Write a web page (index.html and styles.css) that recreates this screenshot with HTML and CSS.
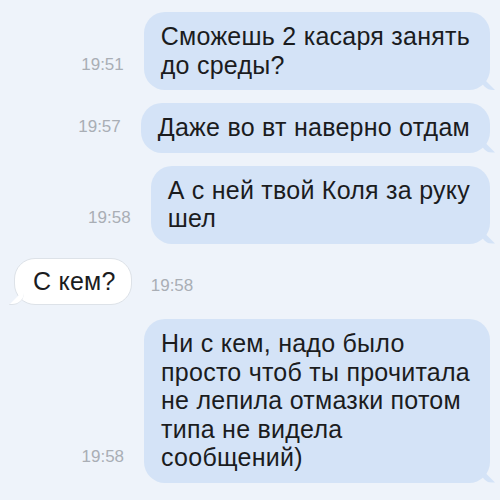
FILE: index.html
```html
<!DOCTYPE html>
<html lang="ru">
<head>
    <meta charset="UTF-8">
    <title>Чат</title>
    <link rel="stylesheet" href="styles.css">
</head>
<body>
    <div class="chat">
        <div class="row out">
            <span class="time">19:51</span>
            <div class="bubble">Сможешь 2 касаря занять<br>до среды?</div>
        </div>
        <div class="row out">
            <span class="time">19:57</span>
            <div class="bubble">Даже во вт наверно отдам</div>
        </div>
        <div class="row out">
            <span class="time">19:58</span>
            <div class="bubble">А с ней твой Коля за руку<br>шел</div>
        </div>
        <div class="row in">
            <div class="bubble">С кем?</div>
            <span class="time">19:58</span>
        </div>
        <div class="row out">
            <span class="time">19:58</span>
            <div class="bubble">Ни с кем, надо было<br>просто чтоб ты прочитала<br>не лепила отмазки потом<br>типа не видела<br>сообщений)</div>
        </div>
    </div>
</body>
</html>
```

FILE: styles.css
```css
body { margin: 0; background: #eef3fa; font-family: "Liberation Sans", Arial, sans-serif; }
.chat { width: 500px; height: 500px; padding: 12px 10px 0 10px; box-sizing: border-box; display: flex; flex-direction: column; gap: 13px; overflow: hidden; }
.row { display: flex; align-items: flex-end; }
.row.out { justify-content: flex-end; }
.row.in { align-items: center; gap: 19px; margin: 1px 0 1px 4px; }
.time { font-size: 17px; line-height: 28.5px; color: #a9aeb5; margin-right: 20px; margin-bottom: 11px; }
.row.in .time { margin: 10px 0 0 0; }
.bubble { position: relative; padding: 10px 20px 11px 17px; font-size: 25px; line-height: 28.5px; letter-spacing: 0.25px; color: #1b1c1e; background: #d4e3f7; border-radius: 21px; white-space: nowrap; }
.row.out .bubble::after { content: ""; position: absolute; right: -5px; bottom: 0; width: 14px; height: 14px; background: #d4e3f7; border-bottom-left-radius: 12px; clip-path: polygon(0 0, 100% 100%, 0 100%); }
.row.in .bubble { background: #fff; border: 1px solid #dde2e8; padding: 8px 15px 9px 18px; }
.row.in .bubble::after { content: ""; position: absolute; left: -6px; bottom: -1px; width: 14px; height: 14px; background: #fff; border-left: 1px solid #dde2e8; border-bottom: 1px solid #dde2e8; border-bottom-right-radius: 12px; clip-path: polygon(100% 0, 100% 100%, 0 100%); }
```
